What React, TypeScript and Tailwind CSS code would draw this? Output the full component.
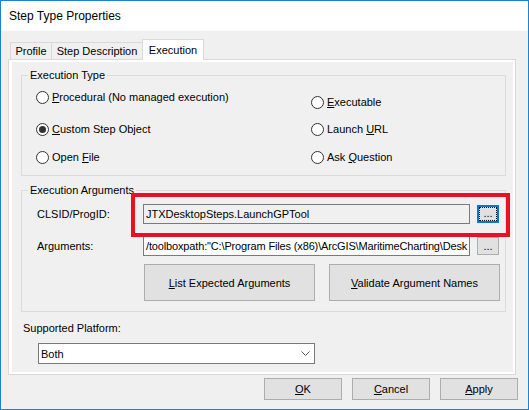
import type { ReactNode } from "react";

const Radio = ({ label, checked }: { label: ReactNode; checked?: boolean }) => (
  <div className="flex h-4 items-center gap-[3px]">
    <svg width="13" height="13" viewBox="0 0 13 13" className="shrink-0">
      <circle cx="6.5" cy="6.5" r="6" fill="#fff" stroke="#333" />
      {checked && <circle cx="6.5" cy="6.5" r="3.5" fill="#333" />}
    </svg>
    <span>{label}</span>
  </div>
);

const Btn = ({ children, className = "" }: { children: ReactNode; className?: string }) => (
  <div className={`flex items-center justify-center border border-[#adadad] bg-[#e1e1e1] ${className}`}>
    {children}
  </div>
);

const App = () => {
  return (
    <div className="relative flex h-[410px] w-[529px] flex-col border border-[#1883d7] bg-[#f0f0f0] font-['Liberation_Sans',Arial,sans-serif] text-[11px] leading-[14px] text-black">
      {/* Title bar */}
      <div className="flex h-[30px] items-center bg-white pl-2 text-[12px]">Step Type Properties</div>

      <div className="flex flex-col px-[7px] pt-2">
        {/* Tabs */}
        <div className="flex h-[20px] items-end pl-[2px]">
          <div className="flex h-[17px] w-[42px] items-center justify-center border border-b-0 border-[#d9d9d9]">Profile</div>
          <div className="flex h-[17px] w-[90px] items-center justify-center border-t border-[#d9d9d9]">Step Description</div>
          <div className="relative z-10 -mb-px flex h-[21px] w-[62px] items-center justify-center border border-b-0 border-[#d9d9d9] bg-white">
            Execution
          </div>
        </div>

        {/* Tab page */}
        <div className="h-[316px] w-[508px] border border-[#d9d9d9]">
          <div className="flex h-full flex-col border-2 border-l-[3px] border-white">
            <fieldset className="ml-[9px] mt-[6px] w-[485px] border border-[#dcdcdc]">
              <legend className="ml-[6px] px-[2px] leading-[14px]">Execution Type</legend>
              <div className="flex pb-[10px] pl-[14px]">
                <div className="flex w-[275px] flex-col pt-[7px]">
                  <Radio label={<><u>P</u>rocedural (No managed execution)</>} />
                  <div className="mt-[16px]">
                    <Radio checked label={<><u>C</u>ustom Step Object</>} />
                  </div>
                  <div className="mt-[12px]">
                    <Radio label={<>Open <u>F</u>ile</>} />
                  </div>
                </div>
                <div className="flex flex-col pt-[12px]">
                  <Radio label={<><u>E</u>xecutable</>} />
                  <div className="mt-[11px]">
                    <Radio label={<>Launch <u>U</u>RL</>} />
                  </div>
                  <div className="mt-[12px]">
                    <Radio label={<>Ask <u>Q</u>uestion</>} />
                  </div>
                </div>
              </div>
            </fieldset>

            <fieldset className="ml-[9px] mt-[7px] w-[485px] border border-[#dcdcdc]">
              <legend className="ml-[6px] px-[2px] leading-[14px]">Execution Arguments</legend>
              <div className="flex flex-col pb-[10px] pl-[15px] pt-[7px]">
                <div className="flex h-[20px] items-center">
                  <span className="w-[106px]">CLSID/ProgID:</span>
                  <div className="flex h-[20px] w-[327px] items-center overflow-hidden whitespace-nowrap border border-[#7a7a7a] bg-[#f0f0f0] pl-[2px]">
                    JTXDesktopSteps.LaunchGPTool
                  </div>
                  <div className="ml-[7px] flex h-[18px] w-[22px] items-center justify-center border-2 border-[#0078d7] bg-[#e1e1e1]">
                    <div className="flex h-full w-full items-end justify-center border border-dotted border-black pb-[1px] leading-none">
                      ...
                    </div>
                  </div>
                </div>
                <div className="mt-[12px] flex h-[20px] items-center">
                  <span className="w-[106px]">Arguments:</span>
                  <div className="flex h-[20px] w-[327px] items-center overflow-hidden whitespace-nowrap border border-[#7a7a7a] bg-white pl-[2px] tracking-[-0.15px]">
                    /toolboxpath:"C:\Program Files (x86)\ArcGIS\MaritimeCharting\Desk
                  </div>
                  <Btn className="ml-[7px] h-[18px] w-[22px] items-end pb-[2px] leading-none">...</Btn>
                </div>
                <div className="ml-[107px] mt-[8px] flex gap-[14px]">
                  <Btn className="h-[37px] w-[171px]">
                    <span><u>L</u>ist Expected Arguments</span>
                  </Btn>
                  <Btn className="h-[37px] w-[171px]">
                    <span><u>V</u>alidate Argument Names</span>
                  </Btn>
                </div>
              </div>
            </fieldset>

            <div className="ml-[11px] mt-[9px]">Supported Platform:</div>
            <div className="ml-[26px] mt-[8px] flex h-[21px] w-[277px] items-center justify-between border border-[#7a7a7a] bg-white pl-[2px] pr-[4px]">
              <span>Both</span>
              <svg width="9" height="5" viewBox="0 0 9 5">
                <polyline points="0.5,0.5 4.5,4.5 8.5,0.5" fill="none" stroke="#606060" />
              </svg>
            </div>
          </div>
        </div>

        {/* Dialog buttons */}
        <div className="mt-[3px] flex justify-end gap-[10px] pr-[3px]">
          <Btn className="h-[22px] w-[78px]"><span><u>O</u>K</span></Btn>
          <Btn className="h-[22px] w-[78px]"><span><u>C</u>ancel</span></Btn>
          <Btn className="h-[22px] w-[78px]"><span><u>A</u>pply</span></Btn>
        </div>
      </div>

      {/* Highlight annotation */}
      <div className="absolute left-[130px] top-[192px] h-[44px] w-[379px] border-4 border-[#e81123]" />
    </div>
  );
};

export default App;
